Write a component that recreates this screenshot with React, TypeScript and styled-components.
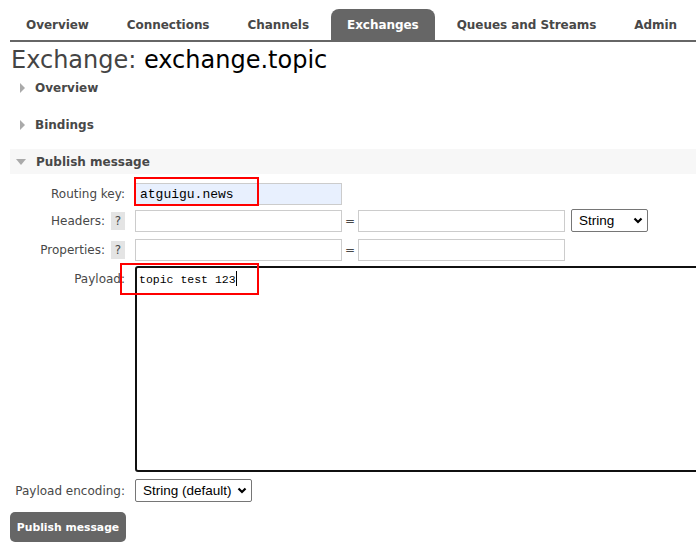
import React from "react";
import styled, { createGlobalStyle } from "styled-components";

const Global = createGlobalStyle`
  html, body { margin: 0; padding: 0; overflow: hidden; background: #fff; }
  body { font-family: "DejaVu Sans", Verdana, sans-serif; font-size: 12px; color: #484848; }
  * { box-sizing: border-box; }
`;

const Page = styled.div`
  padding-left: 10px;
  width: 696px;
  height: 545px;
  overflow: hidden;
`;

const Tabs = styled.ul`
  list-style: none;
  margin: 9px 0 0 0;
  padding: 0;
  display: flex;
  border-bottom: 2px solid #666;
  height: 33px;
`;

const Tab = styled.li<{ $active?: boolean }>`
  height: 32px;
  padding: 0 16px;
  margin-right: 6px;
  display: flex;
  align-items: center;
  font-weight: bold;
  font-size: 12px;
  letter-spacing: -0.05px;
  white-space: nowrap;
  border-radius: 8px 8px 0 0;
  color: ${(p) => (p.$active ? "#fff" : "#484848")};
  background: ${(p) => (p.$active ? "#666" : "transparent")};
`;

const Title = styled.h1`
  margin: 4px 0 0 1px;
  font-size: 24px;
  font-weight: normal;
  color: #444;
  line-height: 29px;
  white-space: nowrap;
  & b { font-weight: normal; color: #000; }
`;

const SectionHead = styled.div<{ $open?: boolean }>`
  display: flex;
  align-items: center;
  height: 25px;
  padding-left: 10px;
  font-weight: bold;
  font-size: 12px;
  color: #484848;
  margin-top: ${(p) => (p.$open ? "12px" : "0")};
  background: ${(p) => (p.$open ? "#f7f7f7" : "transparent")};
`;

const Arrow = styled.span<{ $open?: boolean }>`
  display: inline-block;
  width: 0;
  height: 0;
  margin-right: 10px;
  margin-left: ${(p) => (p.$open ? "-4px" : "0")};
  border-style: solid;
  ${(p) =>
    p.$open
      ? "border-width: 6px 5.5px 0 5.5px; border-color: #aaa transparent transparent transparent;"
      : "border-width: 5px 0 5px 5px; border-color: transparent transparent transparent #aaa;"}
`;

const Gap = styled.div<{ $h: number }>`
  height: ${(p) => p.$h}px;
`;

const Form = styled.div`
  display: flex;
  flex-direction: column;
`;

const Row = styled.div<{ $mt: number; $align?: string }>`
  position: relative;
  display: flex;
  align-items: ${(p) => p.$align || "center"};
  margin-top: ${(p) => p.$mt}px;
`;

const Label = styled.label`
  width: 115px;
  text-align: right;
  font-size: 12px;
  color: #484848;
  flex: none;
  display: flex;
  justify-content: flex-end;
  align-items: center;
  gap: 6px;
  white-space: nowrap;
`;

const Help = styled.span`
  display: inline-flex;
  align-items: center;
  justify-content: center;
  width: 14px;
  height: 18px;
  background: #e4e4e4;
  color: #484848;
  font-size: 12px;
`;

const Controls = styled.div`
  display: flex;
  align-items: center;
  margin-left: 10px;
  position: relative;
`;

const Input = styled.div<{ $filled?: boolean }>`
  width: 207px;
  height: 22px;
  border: 1px solid #ccc;
  background: ${(p) => (p.$filled ? "#e8f0fe" : "#fff")};
  font-family: "Liberation Mono", "Courier New", monospace;
  font-size: 13px;
  color: #000;
  display: flex;
  align-items: center;
  padding-left: 4px;
`;

const Eq = styled.span`
  width: 16px;
  text-align: center;
  color: #484848;
  font-size: 12px;
`;

const Select = styled.div<{ $w: number; $ml?: number }>`
  width: ${(p) => p.$w}px;
  height: 23px;
  border: 1px solid #767676;
  border-radius: 2px;
  display: flex;
  align-items: center;
  justify-content: space-between;
  padding: 0 4px 0 7px;
  font-family: "Liberation Sans", Arial, sans-serif;
  font-size: 13.5px;
  color: #000;
  background: #fff;
  margin-left: ${(p) => p.$ml ?? 6}px;
  white-space: nowrap;
`;

const TextArea = styled.div`
  width: 600px;
  height: 206px;
  border: 2px solid #101010;
  border-radius: 3px;
  font-family: "Liberation Mono", "Courier New", monospace;
  font-size: 11.5px;
  color: #000;
  padding: 3px 0 0 2px;
  line-height: 15px;
`;

const Caret = styled.span`
  display: inline-block;
  width: 1px;
  height: 15px;
  background: #000;
  vertical-align: -3px;
`;

const Mark = styled.div<{ $l: number; $t: number; $w: number; $h: number }>`
  position: absolute;
  left: ${(p) => p.$l}px;
  top: ${(p) => p.$t}px;
  width: ${(p) => p.$w}px;
  height: ${(p) => p.$h}px;
  border: 2px solid #f00;
  pointer-events: none;
`;

const Button = styled.button`
  display: block;
  margin-top: 10px;
  width: 116px;
  height: 30px;
  border: none;
  border-radius: 5px;
  background: #666;
  color: #fff;
  font-family: "DejaVu Sans", Verdana, sans-serif;
  font-weight: bold;
  font-size: 10.8px;
  padding: 0;
`;

const Chevron = () => (
  <svg width="10" height="7" viewBox="0 0 10 7">
    <path d="M1.5 1.5 L5 5 L8.5 1.5" fill="none" stroke="#000" strokeWidth="2.2" />
  </svg>
);

export default function App() {
  const tabs = ["Overview", "Connections", "Channels", "Exchanges", "Queues and Streams", "Admin"];
  return (
    <Page>
      <Global />
      <Tabs>
        {tabs.map((t) => (
          <Tab key={t} $active={t === "Exchanges"}>
            {t}
          </Tab>
        ))}
      </Tabs>
      <Title>
        Exchange: <b>exchange.topic</b>
      </Title>
      <SectionHead>
        <Arrow />
        Overview
      </SectionHead>
      <Gap $h={12} />
      <SectionHead>
        <Arrow />
        Bindings
      </SectionHead>
      <SectionHead $open>
        <Arrow $open />
        Publish message
      </SectionHead>
      <Form>
        <Row $mt={9}>
          <Label>Routing key:</Label>
          <Controls>
            <Input $filled>atguigu.news</Input>
            <Mark $l={-1} $t={-6} $w={125} $h={29} />
          </Controls>
        </Row>
        <Row $mt={4}>
          <Label>
            Headers: <Help>?</Help>
          </Label>
          <Controls>
            <Input />
            <Eq>=</Eq>
            <Input />
            <Select $w={77}>
              String
              <Chevron />
            </Select>
          </Controls>
        </Row>
        <Row $mt={7}>
          <Label>
            Properties: <Help>?</Help>
          </Label>
          <Controls>
            <Input />
            <Eq>=</Eq>
            <Input />
          </Controls>
        </Row>
        <Row $mt={5} $align="flex-start">
          <Label style={{ marginTop: 6 }}>Payload:</Label>
          <Controls>
            <TextArea>
              topic test 123
              <Caret />
            </TextArea>
          </Controls>
          <Mark $l={110} $t={-3} $w={139} $h={32} />
        </Row>
        <Row $mt={7}>
          <Label>Payload encoding:</Label>
          <Controls>
            <Select $w={117} $ml={0}>
              String (default)
              <Chevron />
            </Select>
          </Controls>
        </Row>
      </Form>
      <Button>Publish message</Button>
    </Page>
  );
}
